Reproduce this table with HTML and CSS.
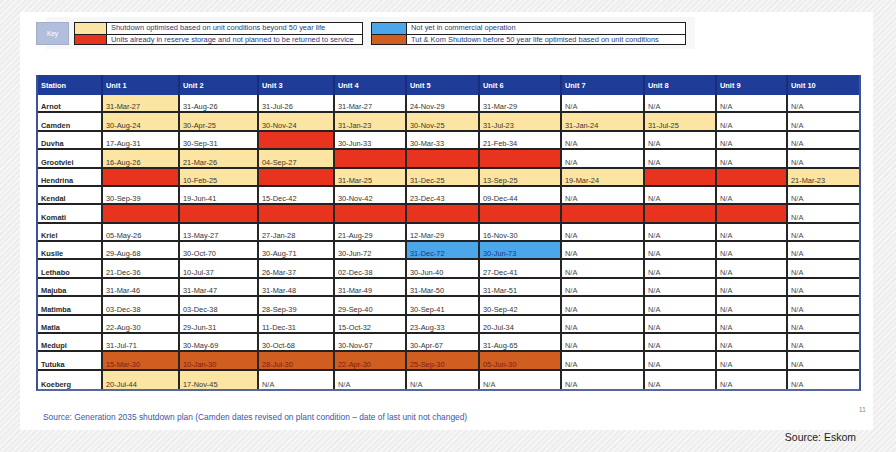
FILE: index.html
```html
<!DOCTYPE html>
<html>
<head>
<meta charset="utf-8">
<link rel="stylesheet" href="styles.css">
</head>
<body>
<div class="slide">
  <div class="legend">
    <div class="key">Key</div>
    <div class="lg-box lg-a">
      <span class="sw y"></span><span class="lt">Shutdown optimised based on unit conditions beyond 50 year life</span>
      <span class="sw r row2"></span><span class="lt row2">Units already in reserve storage and not planned to be returned to service</span>
    </div>
    <div class="lg-box lg-b">
      <span class="sw b"></span><span class="lt">Not yet in commercial operation</span>
      <span class="sw o row2"></span><span class="lt row2">Tut &amp; Kom Shutdown before 50 year life optimised based on unit conditions</span>
    </div>
  </div>

  <div class="table">
    <div class="h">Station</div><div class="h">Unit 1</div><div class="h">Unit 2</div><div class="h">Unit 3</div><div class="h">Unit 4</div><div class="h">Unit 5</div><div class="h">Unit 6</div><div class="h">Unit 7</div><div class="h">Unit 8</div><div class="h">Unit 9</div><div class="h last">Unit 10</div>

    <div class="c st">Arnot</div><div class="c y">31-Mar-27</div><div class="c">31-Aug-26</div><div class="c">31-Jul-26</div><div class="c">31-Mar-27</div><div class="c">24-Nov-29</div><div class="c">31-Mar-29</div><div class="c na">N/A</div><div class="c na">N/A</div><div class="c na">N/A</div><div class="c na last">N/A</div>

    <div class="c st">Camden</div><div class="c y">30-Aug-24</div><div class="c y">30-Apr-25</div><div class="c y">30-Nov-24</div><div class="c y">31-Jan-23</div><div class="c y">30-Nov-25</div><div class="c y">31-Jul-23</div><div class="c y">31-Jan-24</div><div class="c y">31-Jul-25</div><div class="c na">N/A</div><div class="c na last">N/A</div>

    <div class="c st">Duvha</div><div class="c">17-Aug-31</div><div class="c">30-Sep-31</div><div class="c r"></div><div class="c">30-Jun-33</div><div class="c">30-Mar-33</div><div class="c">21-Feb-34</div><div class="c na">N/A</div><div class="c na">N/A</div><div class="c na">N/A</div><div class="c na last">N/A</div>

    <div class="c st">Grootvlei</div><div class="c y">16-Aug-26</div><div class="c y">21-Mar-26</div><div class="c y">04-Sep-27</div><div class="c r"></div><div class="c r"></div><div class="c r"></div><div class="c na">N/A</div><div class="c na">N/A</div><div class="c na">N/A</div><div class="c na last">N/A</div>

    <div class="c st">Hendrina</div><div class="c r"></div><div class="c y">10-Feb-25</div><div class="c r"></div><div class="c y">31-Mar-25</div><div class="c y">31-Dec-25</div><div class="c y">13-Sep-25</div><div class="c y">19-Mar-24</div><div class="c r"></div><div class="c r"></div><div class="c y last">21-Mar-23</div>

    <div class="c st">Kendal</div><div class="c">30-Sep-39</div><div class="c">19-Jun-41</div><div class="c">15-Dec-42</div><div class="c">30-Nov-42</div><div class="c">23-Dec-43</div><div class="c">09-Dec-44</div><div class="c na">N/A</div><div class="c na">N/A</div><div class="c na">N/A</div><div class="c na last">N/A</div>

    <div class="c st">Komati</div><div class="c r"></div><div class="c r"></div><div class="c r"></div><div class="c r"></div><div class="c r"></div><div class="c r"></div><div class="c r"></div><div class="c r"></div><div class="c r"></div><div class="c na last">N/A</div>

    <div class="c st">Kriel</div><div class="c">05-May-26</div><div class="c">13-May-27</div><div class="c">27-Jan-28</div><div class="c">21-Aug-29</div><div class="c">12-Mar-29</div><div class="c">16-Nov-30</div><div class="c na">N/A</div><div class="c na">N/A</div><div class="c na">N/A</div><div class="c na last">N/A</div>

    <div class="c st">Kusile</div><div class="c">29-Aug-68</div><div class="c">30-Oct-70</div><div class="c">30-Aug-71</div><div class="c">30-Jun-72</div><div class="c b">31-Dec-72</div><div class="c b">30-Jun-73</div><div class="c na">N/A</div><div class="c na">N/A</div><div class="c na">N/A</div><div class="c na last">N/A</div>

    <div class="c st">Lethabo</div><div class="c">21-Dec-36</div><div class="c">10-Jul-37</div><div class="c">26-Mar-37</div><div class="c">02-Dec-38</div><div class="c">30-Jun-40</div><div class="c">27-Dec-41</div><div class="c na">N/A</div><div class="c na">N/A</div><div class="c na">N/A</div><div class="c na last">N/A</div>

    <div class="c st">Majuba</div><div class="c">31-Mar-46</div><div class="c">31-Mar-47</div><div class="c">31-Mar-48</div><div class="c">31-Mar-49</div><div class="c">31-Mar-50</div><div class="c">31-Mar-51</div><div class="c na">N/A</div><div class="c na">N/A</div><div class="c na">N/A</div><div class="c na last">N/A</div>

    <div class="c st">Matimba</div><div class="c">03-Dec-38</div><div class="c">03-Dec-38</div><div class="c">28-Sep-39</div><div class="c">29-Sep-40</div><div class="c">30-Sep-41</div><div class="c">30-Sep-42</div><div class="c na">N/A</div><div class="c na">N/A</div><div class="c na">N/A</div><div class="c na last">N/A</div>

    <div class="c st">Matla</div><div class="c">22-Aug-30</div><div class="c">29-Jun-31</div><div class="c">11-Dec-31</div><div class="c">15-Oct-32</div><div class="c">23-Aug-33</div><div class="c">20-Jul-34</div><div class="c na">N/A</div><div class="c na">N/A</div><div class="c na">N/A</div><div class="c na last">N/A</div>

    <div class="c st">Medupi</div><div class="c">31-Jul-71</div><div class="c">30-May-69</div><div class="c">30-Oct-68</div><div class="c">30-Nov-67</div><div class="c">30-Apr-67</div><div class="c">31-Aug-65</div><div class="c na">N/A</div><div class="c na">N/A</div><div class="c na">N/A</div><div class="c na last">N/A</div>

    <div class="c st">Tutuka</div><div class="c o">15-Mar-30</div><div class="c o">10-Jan-30</div><div class="c o">28-Jul-30</div><div class="c o">22-Apr-30</div><div class="c o">25-Sep-30</div><div class="c o">05-Jun-30</div><div class="c na">N/A</div><div class="c na">N/A</div><div class="c na">N/A</div><div class="c na last">N/A</div>

    <div class="c st end">Koeberg</div><div class="c y end">20-Jul-44</div><div class="c y end">17-Nov-45</div><div class="c na end">N/A</div><div class="c na end">N/A</div><div class="c na end">N/A</div><div class="c na end">N/A</div><div class="c na end">N/A</div><div class="c na end">N/A</div><div class="c na end">N/A</div><div class="c na last end">N/A</div>
  </div>

  <div class="foot">
    <span class="note">Source: Generation 2035 shutdown plan (Camden dates revised on plant condition – date of last unit not changed)</span>
    <span class="pg">11</span>
  </div>
</div>
<div class="credit">Source: Eskom</div>
</body>
</html>
```

FILE: styles.css
```css
html, body {
  margin: 0;
  padding: 0;
}
body {
  width: 896px;
  height: 452px;
  overflow: hidden;
  font-family: "Liberation Sans", Arial, sans-serif;
  background: repeating-linear-gradient(-45deg, #f6f6f6 0 2px, #ededed 2px 4px);
}
.slide {
  margin: 12px 0 0 20px;
  width: 853px;
  height: 418px;
  background: #ffffff;
  box-sizing: border-box;
  padding: 5px 0 0 16px;
}
.legend {
  display: flex;
  align-items: flex-start;
  width: 650px;
  padding: 5px 9px 4px 0;
  background: linear-gradient(to right, transparent 10px, #f7f7f7 10px);
}
.key {
  width: 33px;
  height: 23px;
  box-sizing: border-box;
  background: #b2bfdc;
  border: 1px solid #a3aec8;
  color: #ffffff;
  font-size: 6.5px;
  display: flex;
  align-items: center;
  justify-content: center;
  margin-right: 5px;
}
.lg-box {
  display: grid;
  grid-template-rows: 1fr 1fr;
  height: 23px;
  box-sizing: border-box;
  border: 1px solid #1e1e1e;
  background: #ffffff;
}
.lg-a {
  width: 289px;
  grid-template-columns: 31px 1fr;
  margin-right: 8px;
}
.lg-b {
  width: 315px;
  grid-template-columns: 34px 1fr;
}
.lt {
  border-left: 1px solid #1e1e1e;
  font-size: 7.45px;
  line-height: 10px;
  color: #2c3b7c;
  padding-left: 4px;
  white-space: nowrap;
  overflow: hidden;
}
.row2 {
  border-top: 1px solid #1e1e1e;
}
.sw.y, .c.y { background: #fce4a2; }
.sw.r, .c.r { background: #e8331f; }
.sw.b, .c.b { background: #4ba6ea; }
.sw.o, .c.o { background: #cf5e20; }

.table {
  margin-top: 26px;
  width: 825px;
  display: grid;
  grid-template-columns: 65px 77px 79px 76px 72px 73px 82px 83px 72px 71px 71px;
  grid-template-rows: 20px repeat(16, 18.375px);
  border-left: 2px solid #3f5196;
  border-right: 2px solid #3f5196;
  border-bottom: 2px solid #56679e;
  box-sizing: border-box;
  font-size: 7.4px;
}
.h {
  background: #1e3c98;
  color: #ffffff;
  font-weight: bold;
  display: flex;
  align-items: center;
  padding-left: 3px;
  border-right: 2px solid #182f78;
  box-sizing: border-box;
}
.c {
  display: flex;
  align-items: flex-end;
  padding-left: 3px;
  line-height: 8px;
  color: #333333;
  border-right: 2px solid #262626;
  border-bottom: 2px solid #222222;
  box-sizing: border-box;
  white-space: nowrap;
}
.c.last, .h.last {
  border-right: none;
}
.c.end {
  border-bottom: none;
}
.st {
  font-weight: bold;
  color: #2a2a2a;
}
.c.y { color: #3d3624; }
.c.b { color: #17398a; }
.c.o { color: #7c2110; }
.na { color: #4a4a4a; }

.foot {
  display: flex;
  justify-content: space-between;
  align-items: flex-start;
  margin-top: 15px;
  padding: 0 7px;
}
.note {
  padding-top: 7px;
  font-size: 8.4px;
  line-height: 8px;
  color: #3a57ad;
}
.pg {
  font-size: 7px;
  line-height: 8px;
  color: #8a8a8a;
}
.credit {
  width: 856px;
  margin-top: 1px;
  text-align: right;
  font-size: 10.5px;
  line-height: 12px;
  color: #222222;
}
```
